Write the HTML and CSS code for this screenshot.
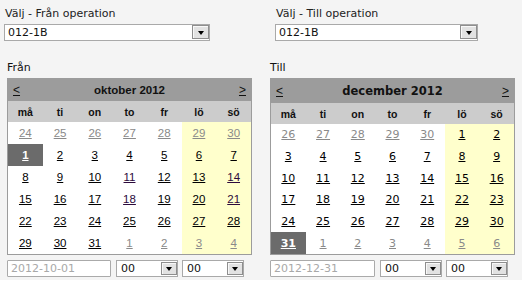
FILE: index.html
```html
<!DOCTYPE html>
<html lang="sv">
<head>
<meta charset="utf-8">
<title>Välj operation</title>
<link rel="stylesheet" href="styles.css">
</head>
<body>
<div class="page">
  <div class="ops">
    <div class="op op-from">
      <div class="op-label">Välj - Från operation</div>
      <div class="select select-op"><span class="select-text">012-1B</span><span class="select-btn"><span class="tri"></span></span></div>
    </div>
    <div class="op op-to">
      <div class="op-label">Välj - Till operation</div>
      <div class="select select-op"><span class="select-text">012-1B</span><span class="select-btn"><span class="tri"></span></span></div>
    </div>
  </div>

  <div class="cals">
    <div class="calcol">
      <div class="cal-title">Från</div>
      <div class="cal cal-a">
        <div class="cal-head"><a class="nav">&lt;</a><span class="month">oktober 2012</span><a class="nav">&gt;</a></div>
        <div class="cal-wd">
          <span>må</span><span>ti</span><span>on</span><span>to</span><span>fr</span><span>lö</span><span>sö</span>
        </div>
        <div class="cal-days">
          <a class="d o">24</a><a class="d o">25</a><a class="d o">26</a><a class="d o">27</a><a class="d o">28</a><a class="d o we">29</a><a class="d o we">30</a>
          <a class="d sel">1</a><a class="d">2</a><a class="d">3</a><a class="d">4</a><a class="d">5</a><a class="d we">6</a><a class="d we">7</a>
          <a class="d">8</a><a class="d">9</a><a class="d">10</a><a class="d v">11</a><a class="d">12</a><a class="d we">13</a><a class="d we v">14</a>
          <a class="d">15</a><a class="d">16</a><a class="d">17</a><a class="d v">18</a><a class="d">19</a><a class="d we">20</a><a class="d we v">21</a>
          <a class="d">22</a><a class="d">23</a><a class="d">24</a><a class="d">25</a><a class="d">26</a><a class="d we">27</a><a class="d we">28</a>
          <a class="d">29</a><a class="d">30</a><a class="d">31</a><a class="d o">1</a><a class="d o">2</a><a class="d o we">3</a><a class="d o we">4</a>
        </div>
      </div>
      <div class="cal-inputs">
        <div class="date-input">2012-10-01</div>
        <div class="select select-sm"><span class="select-text">00</span><span class="select-btn"><span class="tri"></span></span></div>
        <div class="select select-sm"><span class="select-text">00</span><span class="select-btn"><span class="tri"></span></span></div>
      </div>
    </div>

    <div class="calcol">
      <div class="cal-title">Till</div>
      <div class="cal cal-b">
        <div class="cal-head"><a class="nav">&lt;</a><span class="month">december 2012</span><a class="nav">&gt;</a></div>
        <div class="cal-wd">
          <span>må</span><span>ti</span><span>on</span><span>to</span><span>fr</span><span>lö</span><span>sö</span>
        </div>
        <div class="cal-days">
          <a class="d o">26</a><a class="d o">27</a><a class="d o">28</a><a class="d o">29</a><a class="d o">30</a><a class="d we">1</a><a class="d we">2</a>
          <a class="d">3</a><a class="d">4</a><a class="d">5</a><a class="d">6</a><a class="d">7</a><a class="d we">8</a><a class="d we">9</a>
          <a class="d">10</a><a class="d">11</a><a class="d">12</a><a class="d">13</a><a class="d">14</a><a class="d we">15</a><a class="d we">16</a>
          <a class="d">17</a><a class="d">18</a><a class="d">19</a><a class="d">20</a><a class="d">21</a><a class="d we">22</a><a class="d we">23</a>
          <a class="d">24</a><a class="d">25</a><a class="d">26</a><a class="d">27</a><a class="d">28</a><a class="d we">29</a><a class="d we">30</a>
          <a class="d sel">31</a><a class="d o">1</a><a class="d o">2</a><a class="d o">3</a><a class="d o">4</a><a class="d o we">5</a><a class="d o we">6</a>
        </div>
      </div>
      <div class="cal-inputs">
        <div class="date-input date-wide">2012-12-31</div>
        <div class="select select-sm"><span class="select-text">00</span><span class="select-btn"><span class="tri"></span></span></div>
        <div class="select select-sm"><span class="select-text">00</span><span class="select-btn"><span class="tri"></span></span></div>
      </div>
    </div>
  </div>
</div>
</body>
</html>
```

FILE: styles.css
```css
* { box-sizing: border-box; }

html, body {
  margin: 0;
  padding: 0;
  background: #ffffff;
}

body {
  font-family: "DejaVu Sans", Verdana, sans-serif;
  font-size: 11px;
  color: #222;
}

.page {
  background: #f4f4f4;
  height: 280px;
  padding-top: 7px;
  overflow: hidden;
}

/* operation pickers */
.ops {
  display: flex;
  padding-left: 4px;
  gap: 65px;
}

.op-from { width: 206px; }
.op-to { width: 203px; }

.op-label {
  line-height: 13px;
  height: 13px;
  margin-bottom: 4px;
  padding-left: 1px;
}

.select {
  display: flex;
  align-items: flex-start;
  background: #fff;
  border: 1px solid #a9a9a9;
  height: 17px;
}

.select-text {
  flex: 1;
  line-height: 15px;
  padding-left: 3px;
  color: #111;
  white-space: nowrap;
  overflow: hidden;
}

.select-btn {
  width: 17px;
  height: 14px;
  border: 1px solid #8e8e8e;
  background: #e2e2e2;
  box-shadow: inset 1px 1px 0 #f8f8f8;
  display: flex;
  justify-content: center;
  align-items: flex-end;
  padding-bottom: 3px;
}

.tri {
  width: 0;
  height: 0;
  border-left: 3.5px solid transparent;
  border-right: 3.5px solid transparent;
  border-top: 4px solid #000;
}

/* calendars */
.cals {
  display: flex;
  gap: 18px;
  padding-left: 7px;
  margin-top: 20px;
}

.calcol { width: 245px; }

.cal-title {
  line-height: 13px;
  height: 13px;
  margin-bottom: 4px;
  color: #111;
}

.cal {
  border: 1px solid #9c9c9c;
  background: #fff;
  height: 177px;
  display: flex;
  flex-direction: column;
}

.cal-head {
  background: #9c9c9c;
  display: flex;
  align-items: center;
  justify-content: space-between;
  height: 22px;
  padding: 0 5px 0 5px;
  color: #111;
}

.cal-b .cal-head { height: 24px; }

.nav {
  text-decoration: underline;
  font-family: "Liberation Sans", Arial, sans-serif;
  font-size: 12px;
  color: #111;
}

.month {
  font-weight: bold;
}

.cal-a .month {
  font-family: "Liberation Sans", Arial, sans-serif;
  font-size: 11.5px;
}

.cal-b .month {
  font-family: "DejaVu Sans", Verdana, sans-serif;
  font-size: 11.5px;
}

.cal-wd {
  background: #cccccc;
  height: 21px;
  display: grid;
  grid-template-columns: repeat(7, 1fr);
  align-items: center;
  text-align: center;
  font-family: "Liberation Sans", Arial, sans-serif;
  font-weight: bold;
  font-size: 10.5px;
  color: #111;
}

.cal-days {
  flex: 1;
  display: grid;
  grid-template-columns: repeat(7, 1fr);
  grid-template-rows: repeat(6, 1fr);
}

.d {
  display: flex;
  align-items: center;
  justify-content: center;
  text-decoration: underline;
  color: #000;
  font-family: "Liberation Sans", Arial, sans-serif;
  font-size: 11.5px;
}

.cal-b .d {
  font-family: "DejaVu Sans", Verdana, sans-serif;
  font-size: 11px;
}

.d.we { background: #ffffcc; }
.d.o { color: #8a8a8a; }
.d.v { color: #2c0a3c; }

.d.sel {
  background: #6b6b6b;
  color: #fff;
  font-weight: bold;
}

/* bottom inputs */
.cal-inputs {
  display: flex;
  gap: 5px;
  margin-top: 5px;
}

.date-input {
  width: 104px;
  height: 17px;
  border: 1px solid #aaaaaa;
  background: #fff;
  color: #a8a8a8;
  line-height: 15px;
  padding-left: 3px;
  border-radius: 1px;
}

.date-wide { width: 105px; }

.select-sm {
  width: 62px;
}

.select-sm .select-text { padding-left: 4px; }

.select-sm .select-btn {
  width: 16px;
  margin-top: 1px;
  height: 13px;
}
.cal-inputs .select + .select { margin-left: -1px; }
```
